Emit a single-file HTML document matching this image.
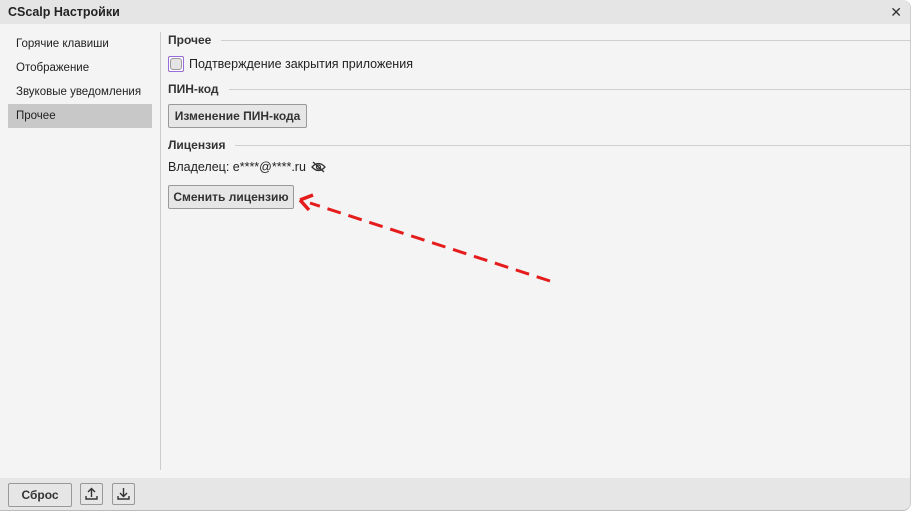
<!DOCTYPE html>
<html><head><meta charset="utf-8"><style>
body{margin:0;width:911px;height:511px;background:#fff;font-family:"Liberation Sans",Arial,sans-serif;overflow:hidden;position:relative}
.win{position:absolute;left:0;top:0;width:910px;height:510px;background:#f4f4f4;border-radius:0 8px 8px 0;overflow:hidden;border-right:1px solid #ccc;border-bottom:1px solid #bbb}
.title{position:absolute;left:0;top:0;right:0;height:24px;background:#e5e5e5;font-size:12.5px;font-weight:bold;color:#222;line-height:25px;padding-left:8px}
.x{position:absolute;right:8px;top:0px;font-size:14px;font-weight:normal;color:#333}
.nav{position:absolute;left:8px;font-size:11.5px;color:#222;width:136px;padding-left:8px;height:24px;line-height:24px}
.sel{background:#c8c8c8}
.vl{position:absolute;left:160px;top:32px;width:1px;height:438px;background:#ccc}
.hd{position:absolute;left:168px;font-size:12px;font-weight:bold;color:#333;right:0;display:flex;align-items:center}
.hd:after{content:"";flex:1;height:1px;background:#cfcfcf;margin-left:10px}
.t{position:absolute;font-size:12.5px;color:#222}
.btn{position:absolute;background:#e6e6e6;border:1px solid #999;border-radius:2px;font-size:12px;font-weight:bold;color:#333;text-align:center;box-sizing:border-box}
.foot{position:absolute;left:0;right:0;top:478px;bottom:0;background:#e6e6e6}
</style></head><body><div class="win">
<div class="title">CScalp Настройки<span class="x">✕</span></div>
<div class="nav" style="top:32px">Горячие клавиши</div>
<div class="nav" style="top:56px">Отображение</div>
<div class="nav" style="top:80px">Звуковые уведомления</div>
<div class="nav sel" style="top:104px">Прочее</div>
<div class="vl"></div>
<div class="hd" style="top:33px">Прочее</div>
<div style="position:absolute;left:168px;top:56px;width:16px;height:16px;border:1px solid #9a6ae0;background:#fff;box-sizing:border-box;border-radius:2px"><div style="margin:1px;width:12px;height:12px;border:1px solid #999;box-sizing:border-box;background:#e4e4e4;border-radius:3px"></div></div>
<div class="t" style="left:189px;top:57px">Подтверждение закрытия приложения</div>
<div class="hd" style="top:82px">ПИН-код</div>
<div class="btn" style="left:168px;top:104px;width:139px;height:24px;line-height:22px">Изменение ПИН-кода</div>
<div class="hd" style="top:138px">Лицензия</div>
<div class="t" style="left:168px;top:160px">Владелец: e****@****.ru</div>
<svg style="position:absolute;left:311px;top:161px" width="15" height="12" viewBox="0 0 15 12"><path d="M1 6Q7.5-1 14 6Q7.5 13 1 6Z" fill="none" stroke="#333" stroke-width="1.3"/><circle cx="7.5" cy="6" r="2" fill="none" stroke="#333" stroke-width="1.2"/><path d="M2 1L13 11" stroke="#333" stroke-width="1.3"/></svg>
<div class="btn" style="left:168px;top:185px;width:126px;height:24px;line-height:22px">Сменить лицензию</div>
<svg style="position:absolute;left:0;top:0" width="911" height="511"><path d="M550 281L310 203" stroke="#e51c1c" stroke-width="3" stroke-dasharray="14 8" fill="none"/><path d="M300 200L313 195M300 200L309 210" stroke="#e51c1c" stroke-width="3.5" fill="none"/></svg>
<div class="foot">
<div class="btn" style="left:8px;top:5px;width:64px;height:24px;line-height:22px">Сброс</div>
<div class="btn" style="left:80px;top:5px;width:23px;height:22px"><svg width="21" height="20" viewBox="0 0 21 20"><path d="M10.5 13V5M7 8l3.5-3.5L14 8M5 12v3h11v-3" fill="none" stroke="#333" stroke-width="1.4"/></svg></div>
<div class="btn" style="left:112px;top:5px;width:23px;height:22px"><svg width="21" height="20" viewBox="0 0 21 20"><path d="M10.5 4v8M7 9l3.5 3.5L14 9M5 12v3h11v-3" fill="none" stroke="#333" stroke-width="1.4"/></svg></div>
</div>
</div></body></html>
